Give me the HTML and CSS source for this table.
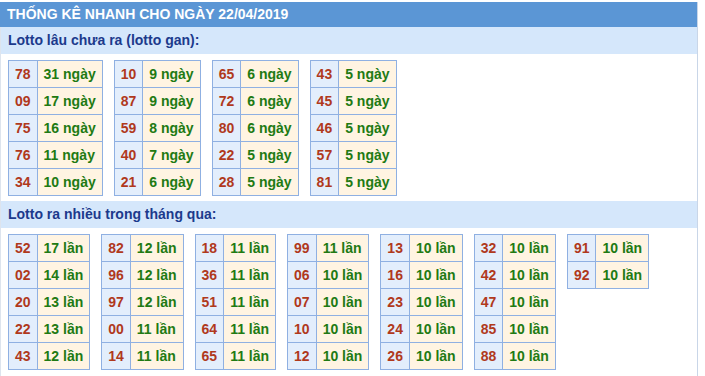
FILE: index.html
```html
<!DOCTYPE html>
<html>
<head>
<meta charset="utf-8">
<link rel="stylesheet" href="styles.css">
</head>
<body>
<div class="box">
  <div class="title">THỐNG KÊ NHANH CHO NGÀY 22/04/2019</div>
  <div class="sub">Lotto lâu chưa ra (lotto gan):</div>
  <div class="tables">
    <table><tr><td class="n">78</td><td class="v">31 ngày</td></tr><tr><td class="n">09</td><td class="v">17 ngày</td></tr><tr><td class="n">75</td><td class="v">16 ngày</td></tr><tr><td class="n">76</td><td class="v">11 ngày</td></tr><tr><td class="n">34</td><td class="v">10 ngày</td></tr></table>
    <table><tr><td class="n">10</td><td class="v">9 ngày</td></tr><tr><td class="n">87</td><td class="v">9 ngày</td></tr><tr><td class="n">59</td><td class="v">8 ngày</td></tr><tr><td class="n">40</td><td class="v">7 ngày</td></tr><tr><td class="n">21</td><td class="v">6 ngày</td></tr></table>
    <table><tr><td class="n">65</td><td class="v">6 ngày</td></tr><tr><td class="n">72</td><td class="v">6 ngày</td></tr><tr><td class="n">80</td><td class="v">6 ngày</td></tr><tr><td class="n">22</td><td class="v">5 ngày</td></tr><tr><td class="n">28</td><td class="v">5 ngày</td></tr></table>
    <table><tr><td class="n">43</td><td class="v">5 ngày</td></tr><tr><td class="n">45</td><td class="v">5 ngày</td></tr><tr><td class="n">46</td><td class="v">5 ngày</td></tr><tr><td class="n">57</td><td class="v">5 ngày</td></tr><tr><td class="n">81</td><td class="v">5 ngày</td></tr></table>
  </div>
  <div class="sub">Lotto ra nhiều trong tháng qua:</div>
  <div class="tables">
    <table><tr><td class="n">52</td><td class="v">17 lần</td></tr><tr><td class="n">02</td><td class="v">14 lần</td></tr><tr><td class="n">20</td><td class="v">13 lần</td></tr><tr><td class="n">22</td><td class="v">13 lần</td></tr><tr><td class="n">43</td><td class="v">12 lần</td></tr></table>
    <table><tr><td class="n">82</td><td class="v">12 lần</td></tr><tr><td class="n">96</td><td class="v">12 lần</td></tr><tr><td class="n">97</td><td class="v">12 lần</td></tr><tr><td class="n">00</td><td class="v">11 lần</td></tr><tr><td class="n">14</td><td class="v">11 lần</td></tr></table>
    <table><tr><td class="n">18</td><td class="v">11 lần</td></tr><tr><td class="n">36</td><td class="v">11 lần</td></tr><tr><td class="n">51</td><td class="v">11 lần</td></tr><tr><td class="n">64</td><td class="v">11 lần</td></tr><tr><td class="n">65</td><td class="v">11 lần</td></tr></table>
    <table><tr><td class="n">99</td><td class="v">11 lần</td></tr><tr><td class="n">06</td><td class="v">10 lần</td></tr><tr><td class="n">07</td><td class="v">10 lần</td></tr><tr><td class="n">10</td><td class="v">10 lần</td></tr><tr><td class="n">12</td><td class="v">10 lần</td></tr></table>
    <table><tr><td class="n">13</td><td class="v">10 lần</td></tr><tr><td class="n">16</td><td class="v">10 lần</td></tr><tr><td class="n">23</td><td class="v">10 lần</td></tr><tr><td class="n">24</td><td class="v">10 lần</td></tr><tr><td class="n">26</td><td class="v">10 lần</td></tr></table>
    <table><tr><td class="n">32</td><td class="v">10 lần</td></tr><tr><td class="n">42</td><td class="v">10 lần</td></tr><tr><td class="n">47</td><td class="v">10 lần</td></tr><tr><td class="n">85</td><td class="v">10 lần</td></tr><tr><td class="n">88</td><td class="v">10 lần</td></tr></table>
    <table><tr><td class="n">91</td><td class="v">10 lần</td></tr><tr><td class="n">92</td><td class="v">10 lần</td></tr></table>
  </div>
</div>
</body>
</html>
```
FILE: styles.css
```css
html, body { margin: 0; padding: 0; background: #fff; }
body { padding-top: 2px; font-family: "Liberation Sans", Arial, sans-serif; }
.box {
  width: 696px;
  border-left: 1px solid #dde4ee;
  border-right: 1px solid #c9d6e8;
  min-height: 380px;
  box-sizing: content-box;
}
.title {
  background: #5b96d5;
  color: #fff;
  font-weight: bold;
  font-size: 14px;
  height: 25px;
  line-height: 25px;
  padding-left: 7px;
  margin-left: -1px;
}
.sub {
  background: #d5e7fb;
  color: #1c3a8c;
  font-weight: bold;
  font-size: 14px;
  height: 27px;
  line-height: 27px;
  padding-left: 7px;
}
.tables {
  display: flex;
  align-items: flex-start;
  gap: 11px;
  padding: 6px 0 5px 7px;
}
table {
  border-collapse: collapse;
  border: 1px solid #8fb0e2;
}
td {
  border: 1px solid #8fb0e2;
  font-weight: bold;
  font-size: 14px;
  height: 27px;
  box-sizing: border-box;
  line-height: 16px;
}
td.n { background: #e3eefc; color: #b0391c; text-align: center; padding: 0 6px; }
td.v { background: #fff4e2; color: #217a13; padding: 0 6px; }
```
